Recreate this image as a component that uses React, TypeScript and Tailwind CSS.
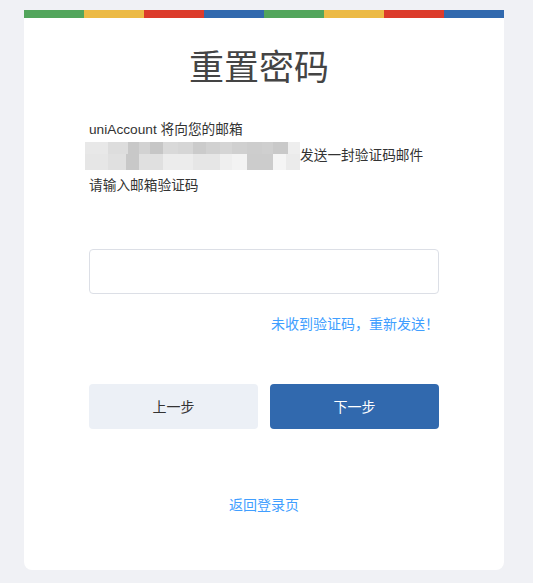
import React from 'react';

const stripes = ['bg-[#52a55c]', 'bg-[#ecba45]', 'bg-[#dc3b2b]', 'bg-[#3169ae]', 'bg-[#52a55c]', 'bg-[#ecba45]', 'bg-[#dc3b2b]', 'bg-[#3169ae]'];

// pixelated (mosaic) email address: [width, colour]
const mosaicTop: [number, string][] = [
    [23, '#e8e8e8'], [20, '#dddddd'], [11, '#c8c8c8'], [11, '#d2d2d2'], [13, '#c6c6c6'],
    [15, '#d9d9d9'], [15, '#d6d6d6'], [13, '#cbcbcb'], [14, '#d1d1d1'], [12, '#d5d5d5'],
    [15, '#d0d0d0'], [15, '#cdcdcd'], [11, '#cfcfcf'], [15, '#c9c9c9'], [12, '#eeeeee'],
];
const mosaicBottom: [number, string][] = [
    [23, '#e6e6e6'], [18, '#e0e0e0'], [13, '#c8c8c8'], [24, '#e0e0e0'], [30, '#ececec'],
    [27, '#e6e6e6'], [12, '#efefef'], [15, '#f3f3f3'], [26, '#cccccc'], [13, '#f5f5f5'], [14, '#ebebeb'],
];

function Mosaic() {
    return (
        <div className="flex flex-col w-[215px] h-[28px] shrink-0">
            <div className="flex h-[12px]">
                {mosaicTop.map(([w, c], i) => (
                    <div key={i} className="h-full" style={{ width: w, background: c }} />
                ))}
            </div>
            <div className="flex h-[16px]">
                {mosaicBottom.map(([w, c], i) => (
                    <div key={i} className="h-full" style={{ width: w, background: c }} />
                ))}
            </div>
        </div>
    );
}

export default function App() {
    return (
        <div className="min-h-[583px] bg-[#f0f1f5] pt-[10px] pb-[13px] font-['Liberation_Sans','Noto_Sans_CJK_SC',sans-serif]">
            <div className="ml-6 w-[480px] bg-white rounded-b-lg overflow-hidden">
                {/* colour stripe */}
                <div className="flex h-2">
                    {stripes.map((c, i) => (
                        <div key={i} className={`flex-1 ${c}`} />
                    ))}
                </div>

                <div className="px-[65px] pt-[26px] pb-[55px]">
                    <h1 className="text-center pr-[10px] text-[35px] leading-[48px] text-[#444444]">重置密码</h1>

                    <div className="mt-[27px] text-[13.7px] text-[#333333]">
                        <p className="leading-[22px]">uniAccount 将向您的邮箱</p>
                        <div className="flex items-center h-[28px] mt-[1px] -ml-[4px]">
                            <Mosaic />
                            <span className="leading-[22px]">发送一封验证码邮件</span>
                        </div>
                        <p className="leading-[22px] mt-[5px]">请输入邮箱验证码</p>
                    </div>

                    <input
                        type="text"
                        className="mt-[52px] block w-full h-[45px] rounded border border-[#dcdfe6] px-3 text-sm outline-none"
                    />

                    <div className="mt-[20px] text-right text-sm leading-5 text-[#409eff]">
                        未收到验证码，重新发送！
                    </div>

                    <div className="mt-[50px] flex gap-3">
                        <button className="flex-1 h-[45px] rounded bg-[#ecf0f6] text-sm text-[#333333]">上一步</button>
                        <button className="flex-1 h-[45px] rounded bg-[#3169ae] text-sm text-white">下一步</button>
                    </div>

                    <div className="mt-[66px] text-center text-sm leading-5 text-[#409eff]">返回登录页</div>
                </div>
            </div>
        </div>
    );
}
